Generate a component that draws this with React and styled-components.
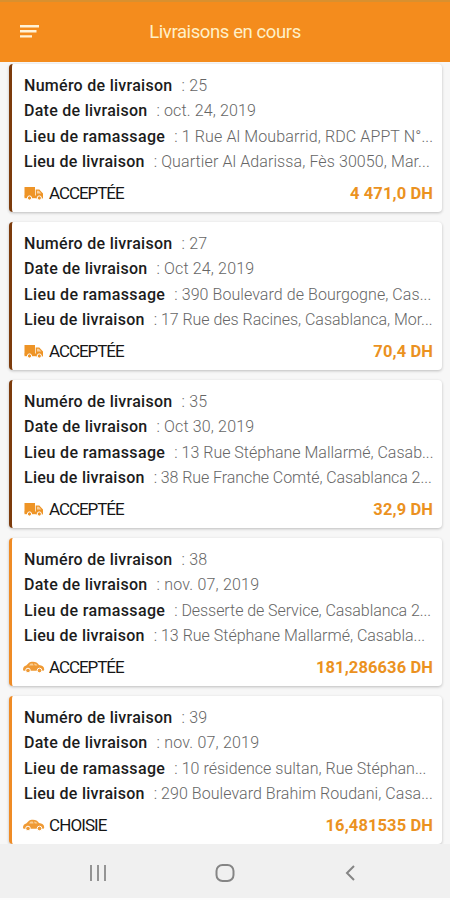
import React from "react";
import styled, { createGlobalStyle } from "styled-components";

const GlobalStyle = createGlobalStyle`
  body {
    margin: 0;
    background: #f7f7f7;
    font-family: Roboto, sans-serif;
  }
`;

const Screen = styled.div`
  width: 450px;
  height: 900px;
  box-sizing: border-box;
  display: flex;
  flex-direction: column;
  overflow: hidden;
  background: #f7f7f7;
  border-bottom: 2px solid #fcfcfc;
`;

const Header = styled.header`
  flex: none;
  height: 62px;
  box-sizing: border-box;
  display: grid;
  grid-template-columns: 50px 1fr 50px;
  align-items: center;
  background: #f48c1d;
  border-top: 2px solid #d9902f;
`;

const MenuButton = styled.button`
  display: flex;
  padding: 0 0 0 20px;
  border: 0;
  background: none;
`;

const Title = styled.h1`
  margin: 0;
  text-align: center;
  font-size: 18.5px;
  line-height: 24px;
  font-weight: 400;
  letter-spacing: -0.4px;
  color: #fff0c8;
`;

const List = styled.main`
  flex: 1;
  display: flex;
  flex-direction: column;
  gap: 10px;
  padding: 2px 8px 0 9px;
`;

const Card = styled.article`
  flex: none;
  height: 148px;
  box-sizing: border-box;
  padding: 9px 9px 0 12px;
  border-left: 3px solid ${props => props.accent};
  border-radius: 4px;
  background: #fff;
  box-shadow: 0 1px 3px rgba(0, 0, 0, 0.24);
`;

const Row = styled.div`
  display: flex;
  height: 25.4px;
  line-height: 25.4px;
  white-space: nowrap;
`;

const Label = styled.span`
  flex: none;
  margin-right: 9px;
  font-size: 16px;
  font-weight: 500;
  letter-spacing: ${props => props.spacing}px;
  color: #1c1c1c;
`;

const Value = styled.span`
  font-size: 16px;
  font-weight: 300;
  letter-spacing: ${props => props.spacing}px;
  color: #666;
`;

const Footer = styled.div`
  display: flex;
  align-items: center;
  height: 37px;
`;

const IconSlot = styled.span`
  display: flex;
  width: 26px;
  margin-left: -1px;
`;

const Status = styled.span`
  flex: 1;
  font-size: 17px;
  letter-spacing: ${props => props.spacing}px;
  color: #161616;
`;

const Price = styled.span`
  font-size: 16.5px;
  font-weight: 700;
  letter-spacing: ${props => props.spacing}px;
  color: #eb921f;
`;

const NavBar = styled.nav`
  flex: none;
  height: 51px;
  display: flex;
  align-items: center;
  justify-content: space-between;
  padding: 3px 93px 0 89px;
  background: #f0f0f0;
`;

const TruckIcon = () => (
  <svg width="22" height="15" viewBox="0 0 22 15">
    <path fill="#ee9426" d="M1.500 1h10.500v9.500H1.500zM12.700 3.500h3.600L20 7.500v4.700h-7.300z" />
    <path fill="#f9cf9c" d="M14 4.800h1.900l2.400 2.700H14z" />
    <path fill="#ee9426" d="M1.500 9.500h18.500v2.700H1.500z" />
    <circle cx="6.500" cy="12" r="2.100" fill="#ee9426" stroke="#fff" />
    <circle cx="16.300" cy="12" r="2.100" fill="#ee9426" stroke="#fff" />
  </svg>
);

const CarIcon = () => (
  <svg width="22" height="13" viewBox="0 0 22 13">
    <path
      fill="#ef9a35"
      d="M0 8.500C0 6 1.400 5 3.200 4.500L6 1.700C7 .9 8 .8 10 .8c3 0 4.300.8 6 3.200 3.200.5 5.200 1.500 5.200 4.200 0 1-.6 1.600-1.500 1.600H1.400C.5 9.800 0 9.500 0 8.500z"
    />
    <path fill="#f9ce93" d="M6 4.400 7.600 2.500h2.200l.8 1.900zM11 2.500c1.700.1 2.500.7 3.400 1.900h-2.700z" />
    <circle cx="5" cy="9.500" r="2.300" fill="#ef9a35" stroke="#fff" />
    <circle cx="16.500" cy="9.500" r="2.300" fill="#ef9a35" stroke="#fff" />
  </svg>
);

const BROWN = "#7c3b0c";
const ORANGE = "#ef8b25";

const labels = [
  ["Numéro de livraison", 0.28],
  ["Date de livraison", 0.27],
  ["Lieu de ramassage", 0.37],
  ["Lieu de livraison", 0.27]
];

// each value carries its own letter spacing
const deliveries = [
  {
    accent: BROWN,
    truck: true,
    status: "ACCEPTÉE",
    price: "4 471,0 DH",
    values: [
      ["25", 0.2],
      ["oct. 24, 2019", 0.12],
      ["1 Rue Al Moubarrid, RDC APPT N°...", 0.12],
      ["Quartier Al Adarissa, Fès 30050, Mar...", 0.1]
    ]
  },
  {
    accent: BROWN,
    truck: true,
    status: "ACCEPTÉE",
    price: "70,4 DH",
    values: [
      ["27", 0.2],
      ["Oct 24, 2019", 0.15],
      ["390 Boulevard de Bourgogne, Cas...", 0.07],
      ["17 Rue des Racines, Casablanca, Mor...", -0.03]
    ]
  },
  {
    accent: BROWN,
    truck: true,
    status: "ACCEPTÉE",
    price: "32,9 DH",
    values: [
      ["35", 0.2],
      ["Oct 30, 2019", 0.15],
      ["13 Rue Stéphane Mallarmé, Casab...", 0],
      ["38 Rue Franche Comté, Casablanca 2...", -0.08]
    ]
  },
  {
    accent: ORANGE,
    status: "ACCEPTÉE",
    price: "181,286636 DH",
    values: [
      ["38", 0.2],
      ["nov. 07, 2019", 0.2],
      ["Desserte de Service, Casablanca 2...", -0.07],
      ["13 Rue Stéphane Mallarmé, Casabla...", 0]
    ]
  },
  {
    accent: ORANGE,
    status: "CHOISIE",
    price: "16,481535 DH",
    values: [
      ["39", 0.2],
      ["nov. 07, 2019", 0.2],
      ["10 résidence sultan, Rue Stéphan...", 0.03],
      ["290 Boulevard Brahim Roudani, Casa...", 0.05]
    ]
  }
];

const DeliveryCard = ({ accent, truck, status, price, values }) => (
  <Card accent={accent}>
    {labels.map(([label, spacing], i) => (
      <Row key={label}>
        <Label spacing={spacing}>{label}</Label>
        <Value spacing={values[i][1]}>: {values[i][0]}</Value>
      </Row>
    ))}
    <Footer>
      <IconSlot>{truck ? <TruckIcon /> : <CarIcon />}</IconSlot>
      <Status spacing={status === "CHOISIE" ? -0.9 : -1.05}>{status}</Status>
      <Price spacing={0.1}>{price}</Price>
    </Footer>
  </Card>
);

const App = () => (
  <Screen>
    <GlobalStyle />
    <Header>
      <MenuButton aria-label="Menu">
        <svg width="20" height="14" viewBox="0 0 20 14" stroke="#fff3d8" strokeWidth="2.4">
          <path d="M0 1.200h19M0 6.300h16.500M0 11.400h12" />
        </svg>
      </MenuButton>
      <Title>Livraisons en cours</Title>
    </Header>
    <List>
      {deliveries.map(delivery => (
        <DeliveryCard key={delivery.values[0][0]} {...delivery} />
      ))}
    </List>
    <NavBar>
      <svg width="18" height="18" viewBox="0 0 18 18" stroke="#949494" strokeWidth="2">
        <path d="M2 1v16M9 1v16M16 1v16" />
      </svg>
      <svg width="20" height="20" viewBox="0 0 20 20" fill="none" stroke="#858585" strokeWidth="2">
        <rect x="1.500" y="2" width="17" height="16" rx="6" />
      </svg>
      <svg width="14" height="18" viewBox="0 0 14 18" fill="none" stroke="#858585" strokeWidth="2">
        <path d="M11 2 4 9l7 7" />
      </svg>
    </NavBar>
  </Screen>
);

export default App;
